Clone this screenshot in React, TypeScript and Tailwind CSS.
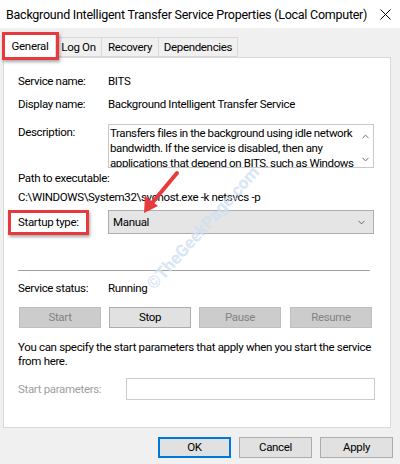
import { ChevronDown, ChevronUp } from "lucide-react";

function Tab({ label, active = false, w }: { label: string; active?: boolean; w: string }) {
  if (active) {
    return (
      <div
        className={`${w} h-[25px] -mb-px bg-white border border-b-0 border-[#d9d9d9] flex items-center justify-center relative z-10`}
      >
        {label}
      </div>
    );
  }
  return (
    <div className={`${w} h-[20px] border border-[#d9d9d9] -ml-px flex items-center justify-center`}>
      {label}
    </div>
  );
}

function Btn({ label, disabled = false }: { label: string; disabled?: boolean }) {
  return (
    <div
      className={`w-[82px] h-[21px] border flex items-center justify-center ${
        disabled
          ? "bg-[#cccccc] border-[#bfbfbf] text-[#838383]"
          : "bg-[#e1e1e1] border-[#adadad] text-black"
      }`}
    >
      {label}
    </div>
  );
}

export default function App() {
  return (
    <div className="relative w-[400px] h-[464px] overflow-hidden bg-[#f0f0f0] text-black font-['Roboto','Liberation_Sans',sans-serif] text-[11.5px] leading-[15px] tracking-[-0.33px]">
      {/* title bar */}
      <div className="h-[28px] bg-white flex items-center justify-between pl-[6px] pr-[9px]">
        <span className="text-[12.5px] tracking-[-0.25px] whitespace-nowrap">
          Background Intelligent Transfer Service Properties (Local Computer)
        </span>
        <svg width="11" height="11" viewBox="0 0 11 11" className="text-black shrink-0">
          <path d="M0.5 0.5 L10.5 10.5 M10.5 0.5 L0.5 10.5" stroke="currentColor" strokeWidth="1" />
        </svg>
      </div>

      {/* tabs */}
      <div className="flex items-end pl-[4px] mt-[5px]">
        <Tab label="General" active w="w-[52px]" />
        <Tab label="Log On" w="w-[47px]" />
        <Tab label="Recovery" w="w-[58px]" />
        <Tab label="Dependencies" w="w-[80px]" />
      </div>

      {/* panel */}
      <div className="ml-[3px] w-[388px] h-[371px] bg-white border border-[#d9d9d9] pl-[14px]">
        <div className="flex mt-[16px]">
          <span className="w-[90px]">Service name:</span>
          <span>BITS</span>
        </div>
        <div className="flex mt-[8px]">
          <span className="w-[90px]">Display name:</span>
          <span>Background Intelligent Transfer Service</span>
        </div>
        <div className="flex mt-[12px]">
          <span className="w-[90px] pt-[1px]">Description:</span>
          <div className="w-[266px] h-[44px] border border-[#c8c8c8] flex overflow-hidden">
            <div className="flex-1 pl-[1px] pt-[1px] overflow-hidden tracking-[-0.4px]">
              Transfers files in the background using idle network bandwidth. If the service is disabled, then any
              applications that depend on BITS, such as Windows Update or MSN Explorer, will be unable to
              automatically download programs and other information.
            </div>
            <div className="w-[15px] shrink-0 flex flex-col items-center justify-between pt-[6px] pb-[2px] text-[#606060]">
              <ChevronUp size={11} strokeWidth={2} />
              <ChevronDown size={11} strokeWidth={2} />
            </div>
          </div>
        </div>
        <div className="mt-[3px]">Path to executable:</div>
        <div className="mt-[4px]">C:\WINDOWS\System32\svchost.exe -k netsvcs -p</div>
        <div className="flex items-center mt-[5px]">
          <span className="w-[90px]">Startup type:</span>
          <div className="w-[266px] h-[24px] bg-[#e5e5e5] border border-[#adadad] flex items-center justify-between pl-[4px] pr-[6px]">
            <span>Manual</span>
            <ChevronDown size={11} strokeWidth={1.5} className="text-[#333]" />
          </div>
        </div>
        <div className="mt-[36px] w-[352px] h-px bg-[#a0a0a0]" />
        <div className="flex mt-[10px]">
          <span className="w-[90px]">Service status:</span>
          <span>Running</span>
        </div>
        <div className="flex gap-[8px] mt-[11px] ml-[1px]">
          <Btn label="Start" disabled />
          <Btn label="Stop" />
          <Btn label="Pause" disabled />
          <div className="ml-[1px]">
            <Btn label="Resume" disabled />
          </div>
        </div>
        <p className="mt-[12px] leading-[14px] w-[360px]">
          You can specify the start parameters that apply when you start the service from here.
        </p>
        <div className="flex items-center mt-[10px]">
          <span className="w-[108px] text-[#a0a0a0]">Start parameters:</span>
          <div className="w-[249px] h-[22px] border border-[#cccccc]" />
        </div>
      </div>

      {/* footer buttons */}
      <div className="flex justify-end gap-[8px] pr-[7px] mt-[9px]">
        <div className="w-[73px] h-[21px] bg-[#e1e1e1] border-2 border-[#0078d7] flex items-center justify-center">
          OK
        </div>
        <div className="w-[73px] h-[21px] bg-[#e1e1e1] border border-[#adadad] flex items-center justify-center">
          Cancel
        </div>
        <div className="w-[73px] h-[21px] bg-[#e1e1e1] border border-[#adadad] flex items-center justify-center">
          Apply
        </div>
      </div>

      {/* watermark */}
      <div className="absolute left-[203px] top-[228px] -translate-x-1/2 -translate-y-1/2 -rotate-[48deg] text-[17px] font-bold tracking-normal text-[#cfe0f3] opacity-80 pointer-events-none whitespace-nowrap">
        ©TheGeekPage.com
      </div>

      {/* annotation boxes */}
      <div className="absolute left-[2px] top-[32px] w-[57px] h-[28px] border-[3px] border-[#e8393f] shadow-[1px_2px_3px_rgba(0,0,0,0.35)] z-20" />
      <div className="absolute left-[8px] top-[210px] w-[81px] h-[25px] border-[3px] border-[#e8393f] shadow-[1px_2px_3px_rgba(0,0,0,0.35)] z-20" />

      {/* arrow */}
      <svg className="absolute left-0 top-0 z-20 pointer-events-none" width="400" height="464">
        <line x1="177" y1="173" x2="152" y2="203" stroke="#e8393f" strokeWidth="4" strokeLinecap="round" />
        <polygon points="144,213 145,196 158,206" fill="#e8393f" />
      </svg>
    </div>
  );
}
